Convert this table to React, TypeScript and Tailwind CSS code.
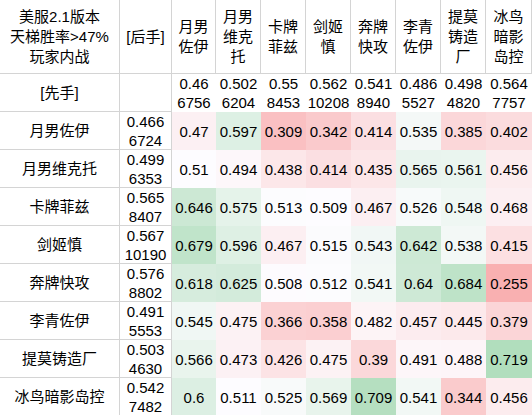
const heroes = ['月男佐伊', '月男维克托', '卡牌菲兹', '剑姬慎', '奔牌快攻', '李青佐伊', '提莫铸造厂', '冰鸟暗影岛控'];

const colHeads = [['月男', '佐伊'], ['月男', '维克', '托'], ['卡牌', '菲兹'], ['剑姬', '慎'], ['奔牌', '快攻'], ['李青', '佐伊'], ['提莫', '铸造', '厂'], ['冰鸟', '暗影', '岛控']];

// 先手 overall win rate, split the way the sheet wraps it
const firstRates = [['0.46', '6756'], ['0.502', '6204'], ['0.55', '8453'], ['0.562', '10208'], ['0.541', '8940'], ['0.486', '5527'], ['0.498', '4820'], ['0.564', '7757']];

// 后手 overall win rate
const secondRates = [['0.466', '6724'], ['0.499', '6353'], ['0.565', '8407'], ['0.567', '10190'], ['0.576', '8802'], ['0.491', '5553'], ['0.503', '4630'], ['0.542', '7482']];

const matrix = [
  [0.47, 0.597, 0.309, 0.342, 0.414, 0.535, 0.385, 0.402],
  [0.51, 0.494, 0.438, 0.414, 0.435, 0.565, 0.561, 0.456],
  [0.646, 0.575, 0.513, 0.509, 0.467, 0.526, 0.548, 0.468],
  [0.679, 0.596, 0.467, 0.515, 0.543, 0.642, 0.538, 0.415],
  [0.618, 0.625, 0.508, 0.512, 0.541, 0.64, 0.684, 0.255],
  [0.545, 0.475, 0.366, 0.358, 0.482, 0.457, 0.445, 0.379],
  [0.566, 0.473, 0.426, 0.475, 0.39, 0.491, 0.488, 0.719],
  [0.6, 0.511, 0.525, 0.569, 0.709, 0.541, 0.344, 0.456],
];

const MIN = 0.255;
const MID = 0.51;
const MAX = 0.719;
const WHITE = [253, 252, 255];
const RED = [249, 176, 177];
const GREEN = [177, 222, 189];

function scaleColor(v: number) {
  const [to, t] = v < MID ? [RED, (MID - v) / (MID - MIN)] : [GREEN, (v - MID) / (MAX - MID)];
  const c = WHITE.map((w, i) => Math.round(w + (to[i] - w) * Math.min(1, t)));
  return `rgb(${c[0]}, ${c[1]}, ${c[2]})`;
}

function Lines({ lines }: { lines: string[] }) {
  return (
    <div className="text-center">
      {lines.map((l, i) => (
        <div key={i}>{l}</div>
      ))}
    </div>
  );
}

const cellBorder = 'border-r border-b border-[#d4d4d4]';

export default function App() {
  return (
    <div className="w-[532px] h-[415px] overflow-hidden bg-white text-black text-[15px] leading-[19px] font-[family-name:'Liberation_Sans','Noto_Sans_CJK_SC',sans-serif]">
      <div className="grid grid-cols-[120px_52px_44px_45px_45px_45px_45px_45px_45px_46px]">
        {/* header row */}
        <div className={`h-[74px] flex items-center justify-center leading-[20px] ${cellBorder}`}>
          <Lines lines={['美服2.1版本', '天梯胜率>47%', '玩家内战']} />
        </div>
        <div className={`h-[74px] flex items-center justify-center ${cellBorder}`}>[后手]</div>
        {colHeads.map((h, i) => (
          <div key={i} className={`h-[74px] flex items-center justify-center leading-[20px] ${cellBorder}`}>
            <Lines lines={h} />
          </div>
        ))}

        {/* 先手 row */}
        <div className={`h-[38px] flex items-center justify-center ${cellBorder}`}>[先手]</div>
        <div className={`h-[38px] ${cellBorder}`} />
        {firstRates.map((r, i) => (
          <div key={i} className="h-[38px] flex items-center justify-center">
            <Lines lines={r} />
          </div>
        ))}

        {/* matchup rows */}
        {heroes.map((name, r) => (
          <div key={name} className="contents">
            <div className={`h-[38px] flex items-center justify-center ${cellBorder}`}>{name}</div>
            <div className={`h-[38px] flex items-center justify-center ${cellBorder}`}>
              <Lines lines={secondRates[r]} />
            </div>
            {matrix[r].map((v, c) => (
              <div
                key={c}
                className="h-[38px] flex items-center justify-center"
                style={{ backgroundColor: scaleColor(v) }}
              >
                {v}
              </div>
            ))}
          </div>
        ))}
      </div>
    </div>
  );
}
